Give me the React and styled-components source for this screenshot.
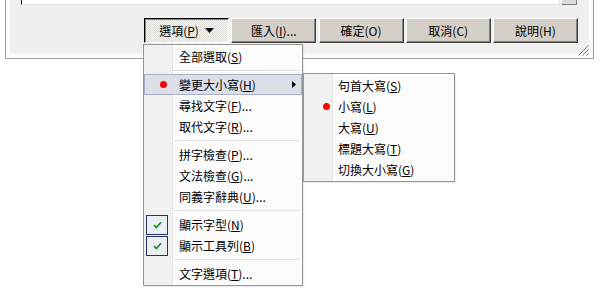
import React from "react";
import styled, { createGlobalStyle, css } from "styled-components";

const Global = createGlobalStyle`
  html, body { margin: 0; padding: 0; background: #fff; }
  body {
    font-family: "Noto Sans CJK TC", "Noto Sans", sans-serif;
    font-size: 12px;
    color: #000;
  }
`;

const Page = styled.div`
  position: relative;
  width: 600px;
  height: 293px;
  overflow: hidden;
`;

const Dialog = styled.div`
  position: relative;
  margin-left: 5px;
  width: 589px;
  height: 59px;
  box-sizing: border-box;
  border: 1px solid #a0a0a0;
  border-top: none;
  background: #fcfcfc;
  padding: 0 4px 4px 4px;
`;

const Body = styled.div`
  height: 100%;
  box-sizing: border-box;
  background: #f0f0f0;
  padding: 0 12px 0 11px;
  display: flex;
  flex-direction: column;
`;

const FieldRow = styled.div`
  display: flex;
  height: 5px;
  gap: 1px;
`;

const Field = styled.div`
  flex: 1;
  background: #fff;
  box-sizing: border-box;
  border-left: 1px solid #1a1a1a;
  border-bottom: 1px solid #dedede;
  border-right: 1px solid #dedede;
`;

const ScrollBtn = styled.div`
  width: 16px;
  box-sizing: border-box;
  background: #dcdad5;
  border-right: 1px solid #808080;
  border-bottom: 1px solid #808080;
  border-left: 1px solid #fff;
`;

const ButtonRow = styled.div`
  margin-top: 13px;
  display: flex;
  justify-content: flex-end;
  gap: 2.25px;
  margin-right: -1px;
`;

const Btn = styled.div`
  width: 85px;
  height: 25px;
  box-sizing: border-box;
  background: #d4d0c8;
  border: 1px solid;
  border-color: #fff #404040 #404040 #fff;
  box-shadow: inset -1px -1px #808080;
  display: flex;
  align-items: center;
  justify-content: center;
  gap: 6px;
  color: #000;
  ${(p) =>
    p.$pressed &&
    css`
      background: repeating-conic-gradient(#ffffff 0 25%, #d8d6d0 0 50%) 0 0 / 2px 2px;
      border-color: #000 #fff #fff #000;
      box-shadow: inset 1px 1px #808080;
    `}
`;

const Key = styled.span`
  text-decoration: underline;
  text-underline-offset: 1px;
`;

const Grip = styled.svg`
  position: absolute;
  right: 4px;
  bottom: 2px;
`;

const Menu = styled.div`
  position: absolute;
  left: ${(p) => p.$x}px;
  top: ${(p) => p.$y}px;
  width: ${(p) => p.$w}px;
  box-sizing: border-box;
  border: 1px solid #979797;
  padding: 1px 0;
  background: linear-gradient(
    to right,
    #f1f1f1 0 ${(p) => p.$g}px,
    #e2e3e3 ${(p) => p.$g}px ${(p) => p.$g + 1}px,
    #ffffff ${(p) => p.$g + 1}px ${(p) => p.$g + 2}px,
    #fcfcfc ${(p) => p.$g + 2}px
  );
  box-shadow: 1px 1px 1px rgba(0, 0, 0, 0.08);
`;

const Row = styled.div`
  height: 21px;
  box-sizing: border-box;
  display: flex;
  align-items: center;
  padding-left: 1px;
  border: 1px solid transparent;
  white-space: nowrap;
  ${(p) =>
    p.$active &&
    css`
      background: #dcdfe8;
      border-color: #a9b1c6;
    `}
`;

const IconCell = styled.span`
  width: ${(p) => p.$w}px;
  height: 19px;
  display: flex;
  align-items: center;
  justify-content: flex-end;
  padding-right: ${(p) => p.$pr}px;
  box-sizing: border-box;
  flex: none;
`;

const Dot = styled.span`
  width: 7px;
  height: 7px;
  border-radius: 50%;
  background: #f00;
`;

const CheckBox = styled.span`
  width: 22px;
  height: 20px;
  margin-right: -${(p) => p.$pr}px;
  box-sizing: border-box;
  border: 1px solid #243468;
  background: #eceef3;
  display: flex;
  align-items: center;
  justify-content: center;
`;

const Label = styled.span`
  margin-left: ${(p) => p.$gap}px;
  line-height: 1;
`;

const SubArrow = styled.svg`
  margin-left: auto;
  margin-right: 5px;
`;

const Sep = styled.div`
  margin: 3px 2px 2px ${(p) => p.$g}px;
  height: 1px;
  background: #e0e0e0;
  border-bottom: 1px solid #fff;
`;

const mainItems = [
  { t: "全部選取", k: "S" },
  { sep: true },
  { t: "變更大小寫", k: "H", dot: true, active: true, sub: true },
  { t: "尋找文字", k: "F", more: true },
  { t: "取代文字", k: "R", more: true },
  { sep: true },
  { t: "拼字檢查", k: "P", more: true },
  { t: "文法檢查", k: "G", more: true },
  { t: "同義字辭典", k: "U", more: true },
  { sep: true },
  { t: "顯示字型", k: "N", check: true },
  { t: "顯示工具列", k: "B", check: true },
  { sep: true },
  { t: "文字選項", k: "T", more: true },
];

const subItems = [
  { t: "句首大寫", k: "S" },
  { t: "小寫", k: "L", dot: true },
  { t: "大寫", k: "U" },
  { t: "標題大寫", k: "T" },
  { t: "切換大小寫", k: "G" },
];

function MenuList({ items, x, y, w, g, cell, pr, gap }) {
  return (
    <Menu $x={x} $y={y} $w={w} $g={g}>
      {items.map((it, i) =>
        it.sep ? (
          <Sep key={i} $g={g} />
        ) : (
          <Row key={i} $active={it.active}>
            <IconCell $w={cell} $pr={pr}>
              {it.dot && <Dot />}
              {it.check && (
                <CheckBox $pr={pr}>
                  <svg width="9" height="8" viewBox="0 0 9 8">
                    <path d="M1 4.2 L3.4 6.6 L8 1.2" fill="none" stroke="#1c8a2a" strokeWidth="1.7" />
                  </svg>
                </CheckBox>
              )}
            </IconCell>
            <Label $gap={gap}>
              {it.t}(<Key>{it.k}</Key>){it.more ? "..." : ""}
            </Label>
            {it.sub && (
              <SubArrow width="4" height="7" viewBox="0 0 4 7">
                <polygon points="0,0 4,3.5 0,7" fill="#000" />
              </SubArrow>
            )}
          </Row>
        )
      )}
    </Menu>
  );
}

export default function App() {
  return (
    <Page>
      <Global />
      <Dialog>
        <Body>
          <FieldRow>
            <Field />
            <ScrollBtn />
          </FieldRow>
          <ButtonRow>
            <Btn $pressed>
              <span>
                選項(<Key>P</Key>)
              </span>
              <svg width="9" height="5" viewBox="0 0 9 5">
                <polygon points="0,0 9,0 4.5,5" fill="#000" />
              </svg>
            </Btn>
            <Btn>
              <span>
                匯入(<Key>I</Key>)...
              </span>
            </Btn>
            <Btn>確定(O)</Btn>
            <Btn>取消(C)</Btn>
            <Btn>說明(H)</Btn>
          </ButtonRow>
        </Body>
        <Grip width="11" height="11" viewBox="0 0 11 11">
          <g strokeWidth="1">
            <line x1="10.5" y1="0.5" x2="0.5" y2="10.5" stroke="#808080" />
            <line x1="10.5" y1="4.5" x2="4.5" y2="10.5" stroke="#808080" />
            <line x1="10.5" y1="8.5" x2="8.5" y2="10.5" stroke="#808080" />
          </g>
        </Grip>
      </Dialog>
      <MenuList items={mainItems} x={143} y={44} w={160} g={28} cell={22} pr={1} gap={11} />
      <MenuList items={subItems} x={303} y={73} w={152} g={28} cell={25} pr={1} gap={7} />
    </Page>
  );
}
